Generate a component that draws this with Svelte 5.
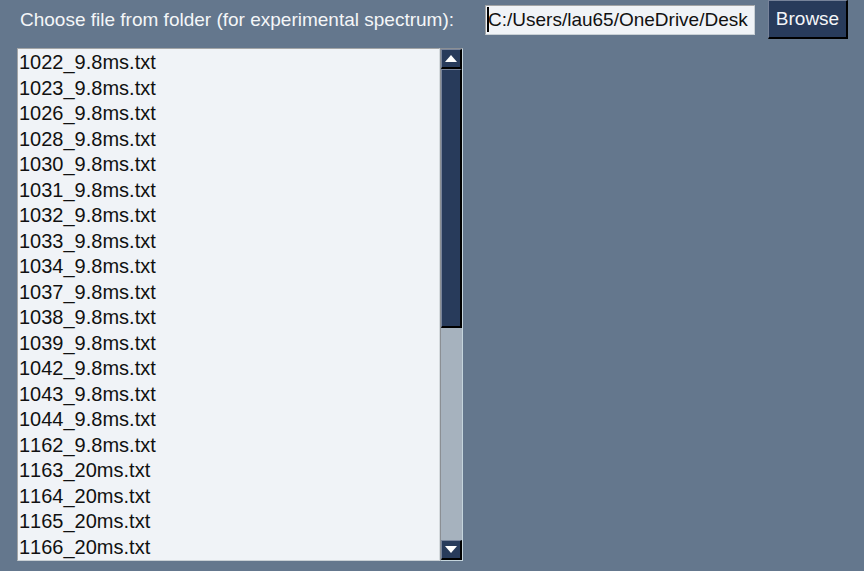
<script>
  const files = [
    '1022_9.8ms.txt', '1023_9.8ms.txt', '1026_9.8ms.txt', '1028_9.8ms.txt',
    '1030_9.8ms.txt', '1031_9.8ms.txt', '1032_9.8ms.txt', '1033_9.8ms.txt',
    '1034_9.8ms.txt', '1037_9.8ms.txt', '1038_9.8ms.txt', '1039_9.8ms.txt',
    '1042_9.8ms.txt', '1043_9.8ms.txt', '1044_9.8ms.txt', '1162_9.8ms.txt',
    '1163_20ms.txt', '1164_20ms.txt', '1165_20ms.txt', '1166_20ms.txt'
  ];
  let folder = $state('C:/Users/lau65/OneDrive/Desk');
  let list;
  const scroll = (rows) => list.scrollBy(0, rows * 26);
</script>

<main>
  <div class="chooser">
    <label for="folder">Choose file from folder (for experimental spectrum):</label>
    <div class="field">
      <input id="folder" type="text" bind:value={folder} />
      <span class="caret"></span>
    </div>
    <button class="browse" type="button">Browse</button>
  </div>

  <div class="listbox">
    <select size="20" aria-label="Files" bind:this={list}>
      {#each files as file}
        <option value={file}>{file}</option>
      {/each}
    </select>
    <div class="scrollbar">
      <button type="button" aria-label="Scroll up" onclick={() => scroll(-1)}>
        <svg width="12" height="7" viewBox="0 0 12 7"><path d="M6 0 12 7H0Z" fill="#fff" /></svg>
      </button>
      <div class="track"><div class="thumb"></div></div>
      <button type="button" aria-label="Scroll down" onclick={() => scroll(1)}>
        <svg width="12" height="7" viewBox="0 0 12 7"><path d="M0 0H12L6 7Z" fill="#fff" /></svg>
      </button>
    </div>
  </div>
</main>

<style>
  :global(body) {
    margin: 0;
    background: #64778d;
  }
  main,
  input,
  button,
  select {
    font: 19px/26px "Liberation Sans", Arial, sans-serif;
    font-kerning: none;
  }
  main {
    min-height: 100vh;
    box-sizing: border-box;
    padding-left: 17px;
    color: #f4f6f8;
  }
  .chooser {
    display: flex;
    align-items: center;
    height: 39px;
    padding-left: 3px;
  }
  label {
    flex: none;
    width: 465px;
    white-space: nowrap;
  }
  .field {
    position: relative;
    width: 270px;
    margin-right: 13px;
  }
  input {
    display: block;
    box-sizing: border-box;
    width: 100%;
    height: 30px;
    padding: 0 2px;
    border: 1px solid;
    border-color: #a3a5a6 #c9d0d5 #c9d0d5 #a3a5a6;
    border-radius: 0;
    outline: none;
    background: #f0f3f7;
    color: #111;
  }
  .caret {
    position: absolute;
    left: 2px;
    top: 2px;
    bottom: 3px;
    width: 2px;
    background: #000;
  }
  button {
    box-sizing: border-box;
    padding: 0;
    border: 2px solid;
    border-color: #77839a #000 #000 #77839a;
    border-width: 1px 2px 2px 1px;
    border-radius: 0;
    background: #283b5b;
    color: #f4f6f8;
  }
  .browse {
    width: 80px;
    height: 39px;
  }
  .listbox {
    display: flex;
    width: 446px;
    box-sizing: border-box;
    margin-top: 9px;
  }
  select {
    flex: 1;
    box-sizing: border-box;
    height: 513px;
    padding: 0;
    border: 1px solid;
    border-color: #a3a5a6 #d5dade #c9d0d5 #a3a5a6;
    border-radius: 0;
    outline: none;
    overflow: hidden;
    background: #f0f3f7;
    color: #111;
    font-size: 20px;
  }
  option {
    box-sizing: border-box;
    height: 26px;
    min-height: 0;
    padding: 2px 0 0 1px;
    line-height: 24px;
  }
  option:nth-child(even) {
    height: 25px;
  }
  .scrollbar {
    display: flex;
    flex-direction: column;
    box-sizing: border-box;
    width: 23px;
    border: 1px solid;
    border-color: #8b8f94 #c5d5dd #c5d5dd #8b8f94;
    background: #a6b2be;
  }
  .scrollbar button {
    display: flex;
    align-items: center;
    justify-content: center;
    height: 20px;
  }
  .track {
    flex: 1;
  }
  .thumb {
    box-sizing: border-box;
    height: 55%;
    border: 2px solid;
    border-color: #77839a #000 #000 #77839a;
    border-width: 1px 2px 2px 1px;
    background: #283b5b;
  }
</style>
